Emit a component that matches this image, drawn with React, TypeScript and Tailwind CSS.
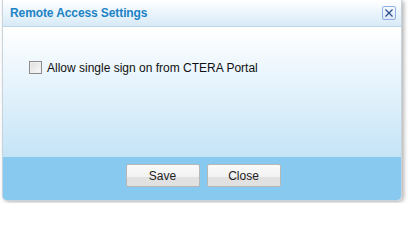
import React from "react";

export default function App() {
  return (
    <div className="w-[408px] h-[203px] bg-white overflow-hidden pl-[2px] pr-[6px] pb-[2px]" style={{ fontFamily: '"Liberation Sans", Arial, sans-serif' }}>
      <div className="h-[201px] flex flex-col border border-t-0 border-[#c9d3db] rounded-b-[5px] shadow-[2px_1px_4px_rgba(0,0,0,0.3)] overflow-hidden">
        <div className="h-[27px] shrink-0 flex items-center justify-between pl-[7px] pr-[5px] bg-gradient-to-b from-[#ffffff] to-[#d7eaf7] border-b border-[#bcd8ec]">
          <span className="text-[12px] font-bold text-[#1b83c6] leading-none tracking-[-0.1px]">Remote Access Settings</span>
          <div className="w-[14px] h-[14px] border border-[#8fb0e0] rounded-[2px] bg-gradient-to-b from-[#f6f9fe] to-[#dde8f8] flex items-center justify-center">
            <svg width="10" height="10" viewBox="0 0 10 10">
              <path d="M1.5 1.5 L8.5 8.5 M8.5 1.5 L1.5 8.5" stroke="#2f4f8f" strokeWidth="1.3" />
            </svg>
          </div>
        </div>
        <div className="flex-1 bg-gradient-to-b from-[#ffffff] to-[#c5e4f7] pt-[34px] pl-[26px]">
          <label className="flex items-center gap-[5px]">
            <span className="w-[13px] h-[13px] border border-[#8a8a8a] bg-gradient-to-br from-[#dcdcdc] to-[#fbfbfb] shadow-[inset_0_0_0_1px_#f0f0f0]" />
            <span className="text-[12px] text-[#111] leading-none">Allow single sign on from CTERA Portal</span>
          </label>
        </div>
        <div className="h-[43px] shrink-0 bg-[#88c9ef] flex justify-center gap-[7px] pt-[7px] pl-[2px]">
          <button className="w-[74px] h-[23px] border border-[#b7b7b7] rounded-[2px] bg-[linear-gradient(#fbfbfb_0,#f2f2f2_55%,#e1e1e1_55%,#e1e1e1_100%)] text-[12px] text-[#222] leading-none">Save</button>
          <button className="w-[74px] h-[23px] border border-[#b7b7b7] rounded-[2px] bg-[linear-gradient(#fbfbfb_0,#f2f2f2_55%,#e1e1e1_55%,#e1e1e1_100%)] text-[12px] text-[#222] leading-none">Close</button>
        </div>
      </div>
    </div>
  );
}
